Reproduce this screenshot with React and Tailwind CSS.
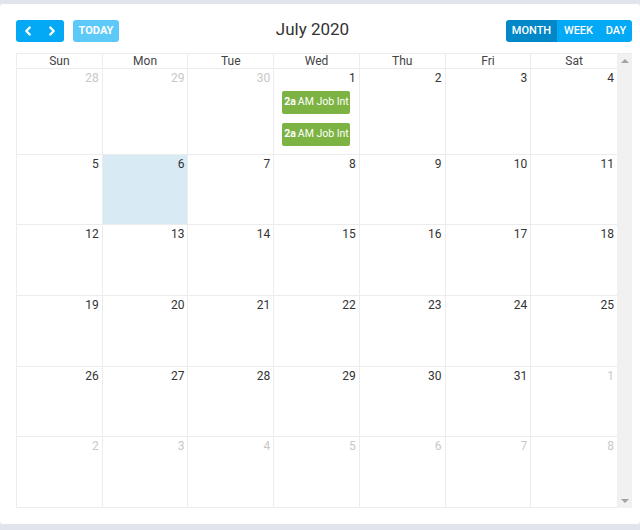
import { ChevronLeft, ChevronRight } from "lucide-react";

const DAYS = ["Sun", "Mon", "Tue", "Wed", "Thu", "Fri", "Sat"];

// each week: [day, isOtherMonth]
const WEEKS = [
  [[28, 1], [29, 1], [30, 1], [1, 0], [2, 0], [3, 0], [4, 0]],
  [[5, 0], [6, 0], [7, 0], [8, 0], [9, 0], [10, 0], [11, 0]],
  [[12, 0], [13, 0], [14, 0], [15, 0], [16, 0], [17, 0], [18, 0]],
  [[19, 0], [20, 0], [21, 0], [22, 0], [23, 0], [24, 0], [25, 0]],
  [[26, 0], [27, 0], [28, 0], [29, 0], [30, 0], [31, 0], [1, 1]],
  [[2, 1], [3, 1], [4, 1], [5, 1], [6, 1], [7, 1], [8, 1]],
];

const ROW_H = ["h-[86px]", "h-[70px]", "h-[71px]", "h-[71px]", "h-[70px]", "h-[72px]"];

function EventChip() {
  return (
    <div className="w-[68px] h-[23px] rounded-[2px] bg-[#7cb342] text-white text-[10.5px] whitespace-nowrap flex items-center justify-center leading-none">
      <span className="font-bold mr-[2px]">2a</span>AM Job Int
    </div>
  );
}

function DayCell({ day, other, today, events, last }) {
  return (
    <div
      className={`border-t border-[#ececec] ${last ? "" : "border-r"} ${today ? "bg-[#d8ebf5]" : "bg-white"}`}
    >
      <div
        className={`text-right text-[12px] leading-[16px] pr-[3px] pt-[1px] ${other ? "text-[#c8c8c8]" : "text-[#333]"}`}
      >
        {day}
      </div>
      {events > 0 && (
        <div className="flex flex-col items-center gap-[9px] mt-[5px]">
          <EventChip />
          <EventChip />
        </div>
      )}
    </div>
  );
}

export default function App() {
  return (
    <div className="bg-[#e1e5eb] h-[530px] pt-[4px] font-['Roboto',sans-serif]">
      <div className="bg-white rounded-[3px] h-[520px] pl-4 pr-2 pt-4">
        {/* toolbar */}
        <div className="flex items-center justify-between h-[22px]">
          <div className="flex items-center gap-[9px]">
            <div className="flex h-[22px] w-[48px] rounded-[3px] bg-[#03a9f4] text-white">
              <button className="flex-1 flex items-center justify-center">
                <ChevronLeft size={14} strokeWidth={4} />
              </button>
              <button className="flex-1 flex items-center justify-center">
                <ChevronRight size={14} strokeWidth={4} />
              </button>
            </div>
            <button className="h-[22px] w-[46px] rounded-[3px] bg-[#5cc9f8] text-white text-[11px] font-bold">
              TODAY
            </button>
          </div>
          <h2 className="text-[17px] text-[#333] leading-[22px] mb-[4px]">July 2020</h2>
          <div className="flex h-[22px] rounded-[3px] overflow-hidden text-white text-[11px] font-medium">
            <button className="w-[51px] bg-[#0288c9]">MONTH</button>
            <button className="w-[43px] bg-[#03a9f4]">WEEK</button>
            <button className="w-[32px] bg-[#03a9f4]">DAY</button>
          </div>
        </div>

        {/* month grid */}
        <div className="mt-[11px] w-[616px] flex border-l border-t border-[#ececec]">
          <div className="flex-1 min-w-0">
            <div className="grid grid-cols-7 h-[14px]">
              {DAYS.map((d, i) => (
                <div
                  key={d}
                  className={`text-center text-[12px] leading-[14px] text-[#444] ${i < 6 ? "border-r border-[#ececec]" : ""}`}
                >
                  {d}
                </div>
              ))}
            </div>
            {WEEKS.map((week, r) => (
              <div key={r} className={`grid grid-cols-7 ${ROW_H[r]} ${r === 5 ? "border-b border-[#ececec]" : ""}`}>
                {week.map(([day, other], c) => (
                  <DayCell
                    key={c}
                    day={day}
                    other={other}
                    today={r === 1 && c === 1}
                    events={r === 0 && c === 3 ? 2 : 0}
                    last={c === 6}
                  />
                ))}
              </div>
            ))}
          </div>
          {/* scrollbar */}
          <div className="w-[15px] shrink-0 bg-[#f1f1f1] flex flex-col items-center justify-between py-[5px]">
            <div className="w-0 h-0 border-l-[4px] border-r-[4px] border-b-[4px] border-l-transparent border-r-transparent border-b-[#a3a3a3]" />
            <div className="w-0 h-0 border-l-[4px] border-r-[4px] border-t-[4px] border-l-transparent border-r-transparent border-t-[#a3a3a3]" />
          </div>
        </div>
      </div>
    </div>
  );
}
